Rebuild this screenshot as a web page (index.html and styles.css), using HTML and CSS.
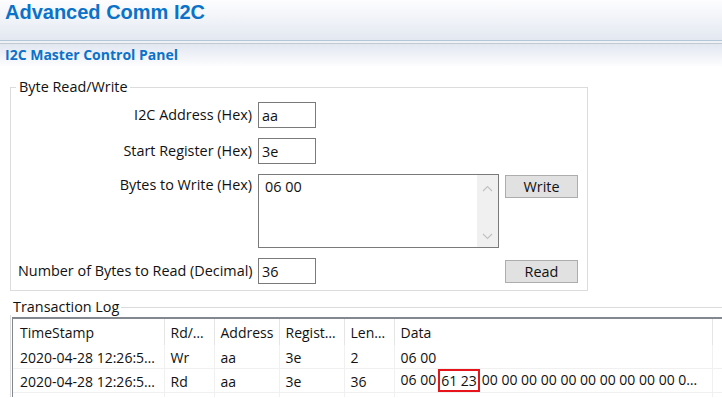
FILE: index.html
```html
<!DOCTYPE html>
<html>
<head>
  <title>Advanced Comm I2C</title>
  <link rel="stylesheet" href="styles.css">
</head>
<body>
  <div id="title-bar"><h1>Advanced Comm I2C</h1></div>
  <div class="bar-gap"></div>
  <div id="panel-bar"><h2>I2C Master Control Panel</h2></div>
  <div id="content">
    <fieldset class="group byte-group">
      <legend>Byte Read/Write</legend>
      <div class="form-grid">
        <label>I2C Address (Hex)</label>
        <div class="field"><input class="textbox" value="aa"></div>
        <div></div>

        <label>Start Register (Hex)</label>
        <div class="field"><input class="textbox" value="3e"></div>
        <div></div>

        <label class="top">Bytes to Write (Hex)</label>
        <div class="multiline">
          <div class="multiline-text">06 00</div>
          <div class="scrollbar">
            <svg width="11" height="7" viewBox="0 0 11 7"><path d="M1 6 L5.5 1.5 L10 6" fill="none" stroke="#c2c2c2" stroke-width="1.2"/></svg>
            <svg width="11" height="7" viewBox="0 0 11 7"><path d="M1 1 L5.5 5.5 L10 1" fill="none" stroke="#c2c2c2" stroke-width="1.2"/></svg>
          </div>
        </div>
        <button class="btn top">Write</button>

        <label>Number of Bytes to Read (Decimal)</label>
        <div class="field"><input class="textbox" value="36"></div>
        <button class="btn">Read</button>
      </div>
    </fieldset>

    <fieldset class="group log-group">
      <legend>Transaction Log</legend>
      <div class="grid-wrap">
        <table class="log">
          <colgroup>
            <col style="width:151px"><col style="width:50px"><col style="width:65px"><col style="width:65px"><col style="width:50px"><col style="width:318px"><col>
          </colgroup>
          <thead>
            <tr><th>TimeStamp</th><th>Rd/…</th><th>Address</th><th>Regist…</th><th>Len…</th><th>Data</th><th></th></tr>
          </thead>
          <tbody>
            <tr><td>2020-04-28 12:26:5…</td><td>Wr</td><td>aa</td><td>3e</td><td>2</td><td>06 00</td><td></td></tr>
            <tr><td>2020-04-28 12:26:5…</td><td>Rd</td><td>aa</td><td>3e</td><td>36</td><td>06 00<span class="mark">61 23</span>00 00 00 00 00 00 00 00 00 00 0…</td><td></td></tr>
            <tr><td></td><td></td><td></td><td></td><td></td><td></td><td></td></tr>
          </tbody>
        </table>
      </div>
    </fieldset>
  </div>
</body>
</html>
```

FILE: styles.css
```css
body { margin: 0; font-family: "Open Sans", "Noto Sans", sans-serif; font-size: 14.4px; color: #111; background: #fff; overflow: hidden; width: 722px; height: 398px; }

/* header bands */
#title-bar { height: 41px; box-sizing: border-box; background: linear-gradient(#fdfdfe, #e3e8f1); border-bottom: 1px solid #b4c7d9; }
h1 { margin: 0; padding: 0 0 0 5px; font: bold 20px/24px "Liberation Sans", Arial, sans-serif; color: #0b72c9; }
.bar-gap { height: 2px; background: #eef2f6; }
#panel-bar { height: 23px; box-sizing: border-box; border-top: 1px solid #c2c9d1; background: linear-gradient(#e1e6f0, #fdfdfe); }
h2 { margin: 0; padding-left: 5px; font: bold 14px/22px "Open Sans", sans-serif; color: #0b72c9; }

#content { padding-top: 13px; }

/* group boxes */
.group { margin: 0 0 0 10px; border: 1px solid #dcdcdc; min-width: 0; }
.group legend { margin-left: -2px; padding: 0 2px 0 3px; line-height: 16px; }
.byte-group { width: 578px; box-sizing: border-box; padding: 7px 9px 6px 7px; }
.log-group { width: 712px; box-sizing: border-box; margin-top: 8px; padding: 2px 0 0 1px; border-right: none; border-bottom: none; }

.form-grid { display: grid; grid-template-columns: 234px 241px 73px; column-gap: 6px; row-gap: 10px; align-items: center; }
.form-grid label { text-align: right; line-height: 16px; white-space: nowrap; }
.form-grid .top { align-self: start; }
.form-grid label.top { margin-top: 3px; }

.textbox { display: block; width: 58px; height: 26px; box-sizing: border-box; margin: 0; padding: 0 3px; border: 1px solid #7a7a7a; font: 14.4px "Open Sans", sans-serif; color: #111; outline: none; }

.multiline { display: flex; height: 74px; box-sizing: border-box; border: 1px solid #7a7a7a; }
.multiline-text { flex: 1; padding: 4px 6px; line-height: 16px; }
.scrollbar { width: 21px; background: #f0f0f0; display: flex; flex-direction: column; justify-content: space-between; align-items: center; padding: 10px 0 7px; }
.scrollbar svg { display: block; }

.btn { height: 23px; margin: 0; padding: 0; background: #e1e1e1; border: 1px solid #adadad; font: 14.4px/19px "Open Sans", sans-serif; color: #111; }
.btn.top { margin-top: 1px; }

/* transaction grid */
.grid-wrap { height: 78px; overflow: hidden; border-left: 1px solid #828790; border-top: 2px solid #828790; font-size: 14px; }
.log { border-collapse: collapse; table-layout: fixed; width: 100%; }
.log th, .log td { text-align: left; font-weight: normal; white-space: nowrap; overflow: hidden; padding: 2px 0 0 6px; line-height: 18px; }
.log th { height: 24px; border-right: 1px solid #e5e5e5; }
.log td { height: 21px; border-right: 1px solid #f0f0f0; border-bottom: 1px solid #f0f0f0; }
.log th:first-child, .log td:first-child { padding-left: 7px; }
.log th:last-child, .log td:last-child { border-right: none; }
.mark { display: inline-block; height: 23px; box-sizing: border-box; margin: -2px 2px 0 2px; padding: 0 1px; border: 2px solid #e8141c; line-height: 19px; vertical-align: middle; }
```
